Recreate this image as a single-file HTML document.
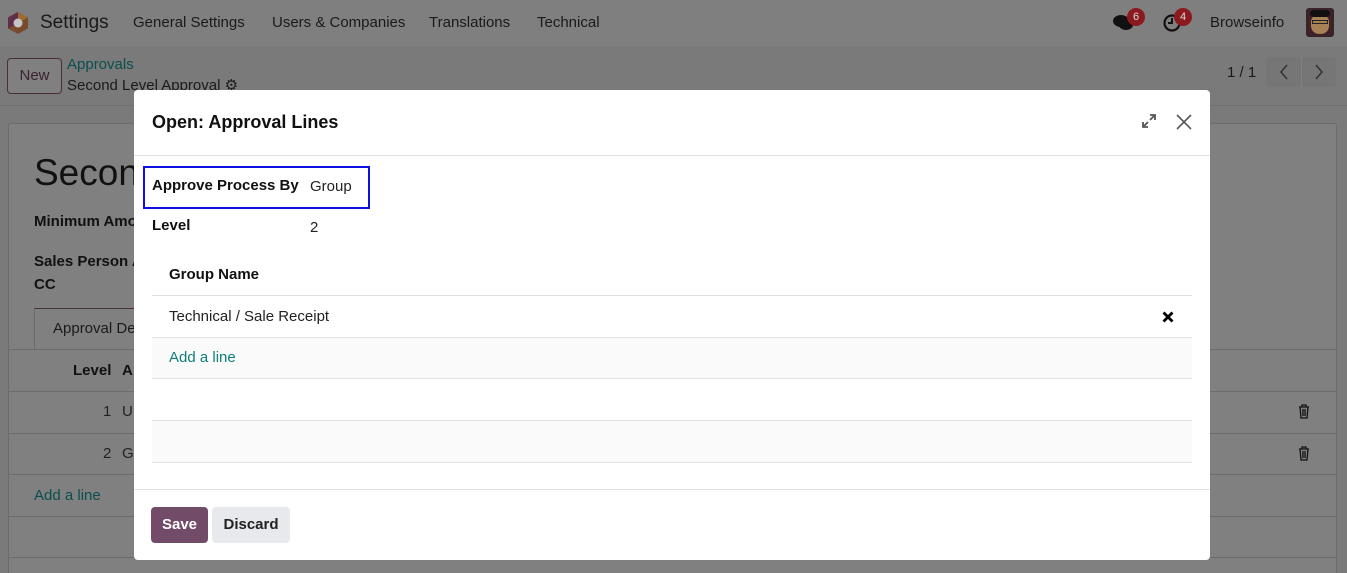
<!DOCTYPE html>
<html><head><meta charset="utf-8"><style>
*{box-sizing:border-box;margin:0;padding:0}
html,body{width:1347px;height:573px;overflow:hidden}
body{background:#7a7a7a;font-family:"Liberation Sans",sans-serif;font-size:15px;color:#111;position:relative}
.abs{position:absolute}
.nav{left:0;top:0;width:1347px;height:46px;background:#7f7f7f}
.nav span{position:absolute;top:14px;font-size:15px;color:#1a1a1a}
.sheet{left:8px;top:123px;width:1329px;height:460px;background:#808080;border:1px solid #6c6c6c;border-radius:3px}
.row{left:8px;width:1329px;height:1px;background:#6c6c6c}
.modal{left:134px;top:90px;width:1076px;height:470px;background:#fff;border-radius:4px}
.m{position:absolute}
.line{position:absolute;left:18px;width:1040px;height:1px;background:#dee2e6}
.b{font-weight:bold}
</style></head><body>
<div class="abs nav">
 <svg class="abs" style="left:7px;top:11px" width="22" height="24" viewBox="0 0 22 24"><polygon points="11,1 21,6.5 21,17.5 11,23 1,17.5 1,6.5" fill="#7a4a2d"/><polygon points="11,1 21,6.5 11,12" fill="#a06a35"/><polygon points="1,6.5 11,1 11,12 1,17.5" fill="#5e2f4a"/><circle cx="11" cy="12" r="4.5" fill="#c5c5c5"/></svg>
 <span style="left:40px;top:12px;font-size:19px">Settings</span>
 <span style="left:133px">General Settings</span>
 <span style="left:272px">Users &amp; Companies</span>
 <span style="left:429px">Translations</span>
 <span style="left:537px">Technical</span>
 <svg class="abs" style="left:1112px;top:14px" width="22" height="18" viewBox="0 0 22 18"><ellipse cx="9" cy="7" rx="8" ry="6" fill="#111"/><ellipse cx="14" cy="11" rx="7" ry="5" fill="#111"/></svg>
 <div class="abs" style="left:1127px;top:8px;width:18px;height:18px;border-radius:9px;background:#8b1a1f;color:#ddd;font-size:11px;text-align:center;line-height:18px">6</div>
 <svg class="abs" style="left:1162px;top:13px" width="20" height="20" viewBox="0 0 20 20"><circle cx="10" cy="10" r="7.5" fill="none" stroke="#111" stroke-width="2.2"/><path d="M10 5v5h-4" stroke="#111" stroke-width="2" fill="none"/></svg>
 <div class="abs" style="left:1174px;top:8px;width:18px;height:18px;border-radius:9px;background:#8b1a1f;color:#ddd;font-size:11px;text-align:center;line-height:18px">4</div>
 <span style="left:1210px">Browseinfo</span>
 <div class="abs" style="left:1306px;top:8px;width:28px;height:29px;border-radius:3px;background:#3a2228;overflow:hidden"><div class="abs" style="left:5px;top:6px;width:18px;height:20px;border-radius:8px;background:#a88055"></div><div class="abs" style="left:4px;top:2px;width:20px;height:7px;background:#111;border-radius:4px"></div><div class="abs" style="left:6px;top:12px;width:16px;height:4px;border:1px solid #222"></div></div>
</div>
<div class="abs" style="left:7px;top:58px;width:55px;height:36px;border:1px solid #4a2d3f;border-radius:4px;text-align:center;line-height:34px;color:#3d2233;font-size:15px;background:#808080">New</div>
<div class="abs" style="left:67px;top:56px;color:#0b4f4d;font-size:15px">Approvals</div>
<div class="abs" style="left:67px;top:76px;color:#1a1a1a;font-size:15px">Second Level Approval ⚙</div>
<div class="abs" style="left:1227px;top:64px;color:#1a1a1a">1 / 1</div>
<div class="abs" style="left:1266px;top:57px;width:70px;height:30px;background:#767676;border-radius:3px">
 <svg class="abs" style="left:13px;top:7px" width="10" height="16" viewBox="0 0 10 16"><path d="M8 1L2 8l6 7" stroke="#333" stroke-width="1.6" fill="none"/></svg>
 <div class="abs" style="left:35px;top:0;width:1px;height:30px;background:#808080"></div>
 <svg class="abs" style="left:48px;top:7px" width="10" height="16" viewBox="0 0 10 16"><path d="M2 1l6 7-6 7" stroke="#333" stroke-width="1.6" fill="none"/></svg>
</div>
<div class="abs" style="left:0;top:105px;width:1347px;height:1px;background:#707070"></div>
<div class="abs sheet"></div>
<div class="abs" style="left:34px;top:152px;font-size:37px;color:#111">Secon</div>
<div class="abs b" style="left:34px;top:213px;color:#111">Minimum Amo</div>
<div class="abs b" style="left:34px;top:253px;color:#111">Sales Person A</div>
<div class="abs b" style="left:34px;top:276px;color:#111">CC</div>
<div class="abs" style="left:34px;top:308px;width:110px;height:42px;border:1px solid #6a6a6a;border-bottom:none;border-top:1px solid #4a2d3f"></div>
<div class="abs" style="left:53px;top:320px;color:#1a1a1a">Approval De</div>
<div class="abs row" style="top:349px"></div>
<div class="abs b" style="left:73px;top:362px">Level</div><div class="abs b" style="left:122px;top:362px">A</div>
<div class="abs row" style="top:391px"></div>
<div class="abs" style="left:103px;top:403px;color:#222">1</div><div class="abs" style="left:122px;top:403px;color:#222">U</div>
<div class="abs row" style="top:433px"></div>
<div class="abs" style="left:103px;top:445px;color:#222">2</div><div class="abs" style="left:122px;top:445px;color:#222">G</div>
<div class="abs row" style="top:474px"></div>
<div class="abs" style="left:34px;top:487px;color:#0b4f4d">Add a line</div>
<div class="abs row" style="top:516px"></div>
<div class="abs row" style="top:557px"></div>
<svg class="abs" style="left:1298px;top:404px" width="12" height="15" viewBox="0 0 12 15"><path d="M1 3h10M4 3V1h4v2M2 3l1 11h6l1-11M5 5v7M7 5v7" stroke="#111" stroke-width="1.3" fill="none"/></svg>
<svg class="abs" style="left:1298px;top:446px" width="12" height="15" viewBox="0 0 12 15"><path d="M1 3h10M4 3V1h4v2M2 3l1 11h6l1-11M5 5v7M7 5v7" stroke="#111" stroke-width="1.3" fill="none"/></svg>

<div class="abs modal">
 <div class="m b" style="left:18px;top:22px;font-size:18px;color:#111">Open: Approval Lines</div>
 <svg class="m" style="left:1008px;top:24px" width="14" height="14" viewBox="0 0 14 14"><path d="M8 1h5v5M13 1L8 6M6 13H1V8M1 13l5-5" stroke="#555" stroke-width="1.8" fill="none"/></svg>
 <svg class="m" style="left:1042px;top:24px" width="16" height="16" viewBox="0 0 16 16"><path d="M1 1L15 15M15 1L1 15" stroke="#555" stroke-width="1.6"/></svg>
 <div class="m" style="left:0;top:65px;width:1076px;height:1px;background:#dee2e6"></div>
 <div class="m" style="left:9px;top:76px;width:227px;height:43px;border:2px solid #1010e0"></div>
 <div class="m b" style="left:18px;top:87px;color:#111">Approve Process By</div>
 <div class="m" style="left:176px;top:88px;color:#222">Group</div>
 <div class="m b" style="left:18px;top:127px;color:#111">Level</div>
 <div class="m" style="left:176px;top:129px;color:#222">2</div>
 <div class="m b" style="left:35px;top:176px;color:#111">Group Name</div>
 <div class="line" style="top:205px"></div>
 <div class="m" style="left:35px;top:218px;color:#222">Technical / Sale Receipt</div>
 <svg class="m" style="left:1028px;top:221px" width="12" height="12" viewBox="0 0 12 12"><path d="M1.5 1.5l9 9M10.5 1.5l-9 9" stroke="#000" stroke-width="2.8"/></svg>
 <div class="line" style="top:247px"></div>
 <div class="m" style="left:18px;top:248px;width:1040px;height:40px;background:#fafafa"></div>
 <div class="m" style="left:35px;top:259px;color:#0f7e7a">Add a line</div>
 <div class="line" style="top:288px"></div>
 <div class="line" style="top:330px"></div>
 <div class="m" style="left:18px;top:331px;width:1040px;height:41px;background:#fafafa"></div>
 <div class="line" style="top:372px"></div>
 <div class="m" style="left:0;top:399px;width:1076px;height:1px;background:#dee2e6"></div>
 <div class="m b" style="left:17px;top:417px;width:57px;height:36px;background:#714b67;border-radius:4px;color:#fff;text-align:center;line-height:36px">Save</div>
 <div class="m b" style="left:78px;top:417px;width:78px;height:36px;background:#e7e9ed;border-radius:4px;color:#222;text-align:center;line-height:36px">Discard</div>
</div>
</body></html>
